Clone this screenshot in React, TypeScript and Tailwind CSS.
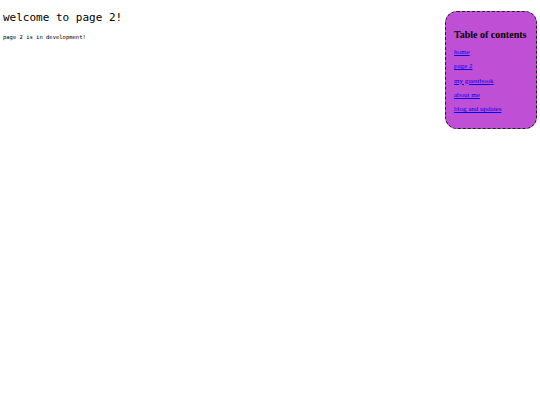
export default function App() {
  const links = ["home", "page 2", "my guestbook", "about me", "blog and updates"];

  return (
    <div className="relative min-h-[405px] w-full bg-white">
      <div className="px-[3px] pt-[11px]">
        <h1 className="font-['DejaVu_Sans_Mono',monospace] text-[11px] leading-[14px] text-black">
          welcome to page 2!
        </h1>
        <p className="mt-[9px] font-['DejaVu_Sans_Mono',monospace] text-[5.5px] leading-[7px] text-black">
          page 2 is in development!
        </p>
      </div>

      <nav className="absolute left-[445px] top-[11px] h-[118px] w-[92px] rounded-[12px] border border-dashed border-[#222] bg-[#bf50d6] px-[8px] pt-[17px]">
        <h2 className="font-['Liberation_Serif',serif] text-[10px] font-bold leading-[12px] text-black">
          Table of contents
        </h2>
        <ul className="mt-[8px] flex flex-col gap-[7px]">
          {links.map((l) => (
            <li key={l} className="font-['Liberation_Serif',serif] text-[7px] leading-[7.3px]">
              <a href="#" className="text-[#0000ee] underline">
                {l}
              </a>
            </li>
          ))}
        </ul>
      </nav>
    </div>
  );
}
